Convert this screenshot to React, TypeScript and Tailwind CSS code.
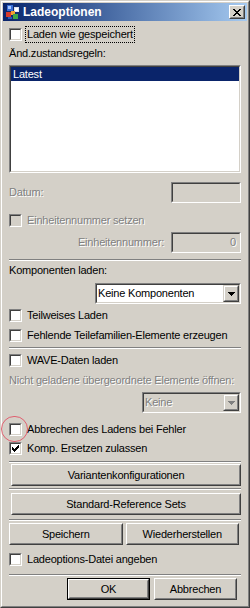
import React from 'react';

const FONT = 'font-["Liberation_Sans",Arial,sans-serif]';

const Checkbox = ({ checked, disabled }: { checked?: boolean; disabled?: boolean }) => (
  <span className="block w-[13px] h-[13px] shrink-0 border border-t-[#808080] border-l-[#808080] border-b-white border-r-white">
    <span
      className={`block w-full h-full border border-t-[#404040] border-l-[#404040] border-b-[#d4d0c8] border-r-[#d4d0c8] ${
        disabled ? 'bg-[#d4d0c8]' : 'bg-white'
      }`}
    >
      {checked && (
        <svg width="9" height="9" viewBox="0 0 9 9" shapeRendering="crispEdges" className="block">
          <rect x="1" y="3" width="1" height="3" fill="#000" />
          <rect x="2" y="4" width="1" height="3" fill="#000" />
          <rect x="3" y="5" width="1" height="3" fill="#000" />
          <rect x="4" y="4" width="1" height="3" fill="#000" />
          <rect x="5" y="3" width="1" height="3" fill="#000" />
          <rect x="6" y="2" width="1" height="3" fill="#000" />
          <rect x="7" y="1" width="1" height="3" fill="#000" />
        </svg>
      )}
    </span>
  </span>
);

const CheckRow = ({
  label,
  checked,
  disabled,
  focus,
  className = '',
}: {
  label: string;
  checked?: boolean;
  disabled?: boolean;
  focus?: boolean;
  className?: string;
}) => (
  <div className={`flex items-center h-[17px] gap-[5px] ${className}`}>
    <Checkbox checked={checked} disabled={disabled} />
    <span
      className={`whitespace-nowrap ${disabled ? 'text-[#808080] [text-shadow:1px_1px_0_#fff]' : ''} ${
        focus ? 'outline-1 outline-dotted outline-black outline-offset-[1px]' : ''
      }`}
    >
      {label}
    </span>
  </div>
);

const Separator = ({ className = '' }: { className?: string }) => (
  <div className={`h-[2px] border-t border-t-[#808080] border-b border-b-white ${className}`} />
);

const Sunken = ({ className = '', children }: { className?: string; children?: React.ReactNode }) => (
  <div className={`border border-t-[#808080] border-l-[#808080] border-b-white border-r-white ${className}`}>
    <div className="h-full border border-t-[#404040] border-l-[#404040] border-b-[#d4d0c8] border-r-[#d4d0c8] flex items-center">
      {children}
    </div>
  </div>
);

const Arrow = ({ disabled }: { disabled?: boolean }) => (
  <div className="w-[16px] h-full shrink-0 border border-t-[#d4d0c8] border-l-[#d4d0c8] border-b-[#404040] border-r-[#404040]">
    <div className="h-full border border-t-white border-l-white border-b-[#808080] border-r-[#808080] bg-[#d4d0c8] flex items-center justify-center">
      <svg width="7" height="4" viewBox="0 0 7 4" shapeRendering="crispEdges">
        <path d="M0 0h7v1h-1v1h-1v1h-1v1h-1v-1h-1v-1h-1v-1h-1z" fill={disabled ? '#808080' : '#000'} />
      </svg>
    </div>
  </div>
);

const Button = ({ label, className = '', isDefault }: { label: string; className?: string; isDefault?: boolean }) => (
  <div className={`${isDefault ? 'border border-black' : ''} ${className}`}>
    <div className="h-full border border-t-white border-l-white border-b-[#404040] border-r-[#404040]">
      <div className="h-full border border-t-[#d4d0c8] border-l-[#d4d0c8] border-b-[#808080] border-r-[#808080] flex items-center justify-center">
        {label}
      </div>
    </div>
  </div>
);

// small app icon in the caption
const TitleIcon = () => (
  <svg width="16" height="16" viewBox="0 0 16 16" shapeRendering="crispEdges">
    <rect x="2" y="1" width="6" height="6" fill="#3a6fd8" />
    <rect x="3" y="2" width="3" height="3" fill="#a8c8ff" />
    <rect x="9" y="3" width="5" height="5" fill="#e0e4f0" />
    <rect x="10" y="4" width="3" height="3" fill="#ffffff" />
    <rect x="1" y="8" width="5" height="5" fill="#d83a2a" />
    <rect x="6" y="7" width="4" height="4" fill="#f0a030" />
    <rect x="8" y="10" width="5" height="5" fill="#3aa84a" />
    <rect x="3" y="13" width="4" height="2" fill="#2b58b8" />
  </svg>
);

export default function App() {
  return (
    <div
      className={`${FONT} text-[11px] leading-[13px] tracking-[-0.2px] text-black w-[250px] h-[608px] bg-[#d4d0c8] border border-t-[#d4d0c8] border-l-[#d4d0c8] border-b-[#404040] border-r-[#404040]`}
    >
      <div className="h-full border border-t-white border-l-white border-b-[#808080] border-r-[#808080] p-px flex flex-col">
        {/* title bar */}
        <div className="h-[18px] shrink-0 flex items-center bg-gradient-to-r from-[#0a246a] to-[#a6caf0]">
          <div className="ml-[2px]">
            <TitleIcon />
          </div>
          <span className="ml-[2px] text-white font-bold text-[12px] tracking-normal">Ladeoptionen</span>
          <div className="ml-auto mr-[2px] w-[16px] h-[14px] border border-t-white border-l-white border-b-[#404040] border-r-[#404040]">
            <div className="h-full border border-t-[#d4d0c8] border-l-[#d4d0c8] border-b-[#808080] border-r-[#808080] bg-[#d4d0c8] flex items-center justify-center">
              <svg width="8" height="7" viewBox="0 0 8 7" shapeRendering="crispEdges">
                <path
                  d="M0 0h2v1h1v1h2v-1h1v-1h2v1h-1v1h-1v1h-1v1h1v1h1v1h1v1h-2v-1h-1v-1h-2v1h-1v1h-2v-1h1v-1h1v-1h1v-1h-1v-1h-1v-1h-1z"
                  fill="#000"
                />
              </svg>
            </div>
          </div>
        </div>

        <div className="relative flex flex-col pl-[6px] pr-[6px]">
          <CheckRow label="Laden wie gespeichert" focus className="mt-[5px]" />
          <div className="mt-[4px] h-[13px]">Änd.zustandsregeln:</div>

          <Sunken className="mt-[5px] h-[108px] bg-white">
            <div className="self-start w-full">
              <div className="h-[14px] bg-[#0a246a] text-white pl-[2px] flex items-center">Latest</div>
            </div>
          </Sunken>

          <div className="mt-[9px] h-[21px] flex items-center justify-between">
            <span className="text-[#808080] [text-shadow:1px_1px_0_#fff]">Datum:</span>
            <Sunken className="w-[70px] h-[21px]" />
          </div>

          <CheckRow label="Einheitennummer setzen" disabled className="mt-[9px]" />

          <div className="mt-[3px] h-[21px] flex items-center justify-end gap-[7px]">
            <span className="text-[#808080] [text-shadow:1px_1px_0_#fff]">Einheitennummer:</span>
            <Sunken className="w-[70px] h-[21px]">
              <span className="ml-auto pr-[3px] text-[#808080] [text-shadow:1px_1px_0_#fff]">0</span>
            </Sunken>
          </div>

          <Separator className="mt-[6px]" />

          <div className="mt-[3px] h-[13px]">Komponenten laden:</div>

          <Sunken className="mt-[6px] h-[21px] w-[146px] self-end bg-white">
            <span className="pl-[1px] flex-1">Keine Komponenten</span>
            <Arrow />
          </Sunken>

          <CheckRow label="Teilweises Laden" className="mt-[3px]" />
          <CheckRow label="Fehlende Teilefamilien-Elemente erzeugen" className="mt-[3px]" />
          <Separator className="mt-[3px]" />
          <CheckRow label="WAVE-Daten laden" className="mt-[3px]" />

          <div className="mt-[5px] h-[13px] whitespace-nowrap text-[#808080] [text-shadow:1px_1px_0_#fff]">
            Nicht geladene übergeordnete Elemente öffnen:
          </div>

          <Sunken className="mt-[5px] h-[21px] w-[99px] self-end bg-[#d4d0c8]">
            <span className="pl-[1px] flex-1 text-[#808080] [text-shadow:1px_1px_0_#fff]">Keine</span>
            <Arrow disabled />
          </Sunken>

          <div className="relative mt-[8px]">
            <CheckRow label="Abbrechen des Ladens bei Fehler" />
            <div className="absolute left-[-8px] top-[-5px] w-[27px] h-[26px] rounded-full border border-[#e06070]" />
          </div>
          <CheckRow label="Komp. Ersetzen zulassen" checked className="mt-[2px]" />

          <Separator className="mt-[4px]" />
          <Button label="Variantenkonfigurationen" className="mt-[1px] ml-[2px] h-[22px]" />
          <Separator className="mt-[2px]" />
          <Button label="Standard-Reference Sets" className="mt-[3px] ml-[2px] h-[22px]" />
          <Separator className="mt-[4px]" />

          <div className="mt-[2px] h-[22px] flex gap-[3px] pr-[2px]">
            <Button label="Speichern" className="flex-1" />
            <Button label="Wiederherstellen" className="flex-1" />
          </div>

          <CheckRow label="Ladeoptions-Datei angeben" className="mt-[6px]" />
          <Separator className="mt-[6px]" />

          <div className="mt-[2px] h-[22px] flex justify-end gap-[4px] pr-[4px]">
            <Button label="OK" isDefault className="w-[83px]" />
            <Button label="Abbrechen" className="w-[83px]" />
          </div>
        </div>
      </div>
    </div>
  );
}
